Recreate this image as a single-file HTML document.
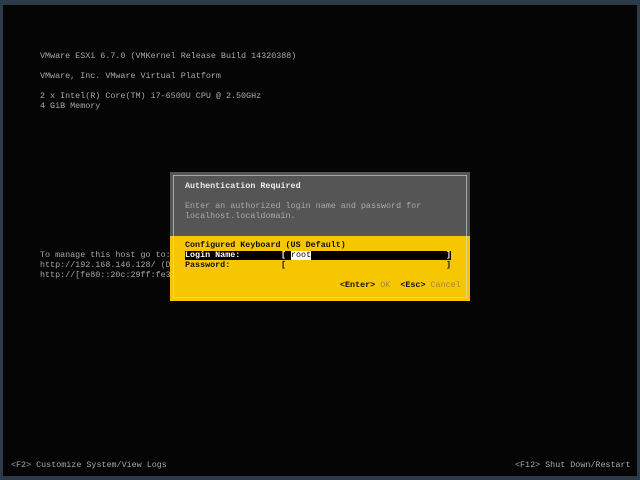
<!DOCTYPE html>
<html><head><meta charset="utf-8"><style>
*{margin:0;padding:0}
body{width:640px;height:480px;background:#050505;position:relative;overflow:hidden;font-family:"Liberation Mono","DejaVu Sans Mono",monospace;font-size:8.4px;line-height:10px;color:#a8a8a8}
.t{position:absolute;white-space:pre}
#frame{position:absolute;left:0;top:0;width:640px;height:480px;box-sizing:border-box;border-top:5px solid #2c3947;border-left:3px solid #2c3947;border-right:3px solid #2c3947;border-bottom:4px solid #2c3947}
#dlg{position:absolute;left:170px;top:172px;width:300px;height:129px;background:#555}
#yel{position:absolute;left:170px;top:236px;width:300px;height:65px;background:#f6c700}
#in{position:absolute;left:173px;top:175px;width:294px;height:123px;border:1px solid rgba(220,220,220,0.6);box-sizing:border-box}
.k{color:#111}
</style></head><body>
<div id="frame"></div>
<div class="t" style="left:40px;top:51px">VMware ESXi 6.7.0 (VMKernel Release Build 14320388)</div>
<div class="t" style="left:40px;top:71px">VMware, Inc. VMware Virtual Platform</div>
<div class="t" style="left:40px;top:91px">2 x Intel(R) Core(TM) i7-6500U CPU @ 2.50GHz</div>
<div class="t" style="left:40px;top:101px">4 GiB Memory</div>
<div class="t" style="left:40px;top:250px">To manage this host go to:</div>
<div class="t" style="left:40px;top:260px">http://192.168.146.128/ (D</div>
<div class="t" style="left:40px;top:270px">http://[fe80::20c:29ff:fe3</div>
<div class="t" style="left:11px;top:460px">&lt;F2&gt; Customize System/View Logs</div>
<div class="t" style="left:515px;top:460px">&lt;F12&gt; Shut Down/Restart</div>
<div id="dlg"></div><div id="yel"></div><div id="in"></div>
<div class="t" style="left:185px;top:181px;color:#eee;font-weight:bold">Authentication Required</div>
<div class="t" style="left:185px;top:201px;color:#aaa">Enter an authorized login name and password for</div>
<div class="t" style="left:185px;top:211px;color:#aaa">localhost.localdomain.</div>
<div class="t k" style="left:185px;top:240px;font-weight:bold">Configured Keyboard (US Default)</div>
<div style="position:absolute;left:185px;top:251px;width:266px;height:9px;background:#000"></div>
<div style="position:absolute;left:291px;top:251px;width:20px;height:9px;background:#fff"></div>
<div class="t" style="left:185px;top:250px;color:#fff;font-weight:bold">Login Name:</div>
<div class="t" style="left:281px;top:250px;color:#fff;font-weight:bold">[</div>
<div class="t" style="left:291px;top:250px;color:#000">root</div>
<div class="t" style="left:446px;top:250px;color:#fff;font-weight:bold">]</div>
<div class="t k" style="left:185px;top:260px;font-weight:bold">Password:</div>
<div class="t k" style="left:281px;top:260px;font-weight:bold">[</div>
<div class="t k" style="left:446px;top:260px;font-weight:bold">]</div>
<div class="t" style="left:340px;top:280px;font-weight:bold"><span class="k">&lt;Enter&gt;</span> <span style="color:#a08a30;font-weight:normal">OK</span>  <span class="k">&lt;Esc&gt;</span> <span style="color:#a08a30;font-weight:normal">Cancel</span></div>
</body></html>
